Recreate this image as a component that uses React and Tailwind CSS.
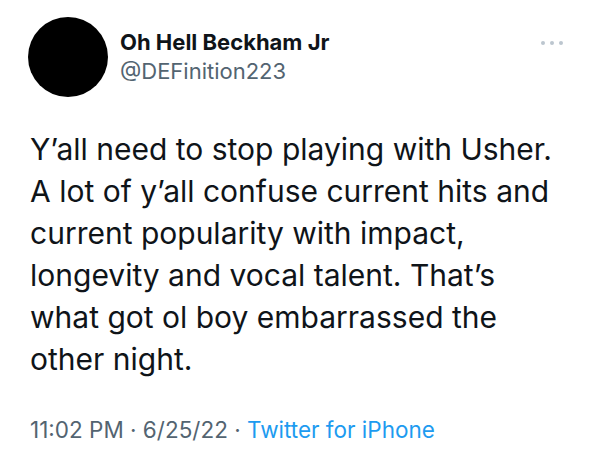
import React from 'react';

export default function App() {
  const font = { fontFamily: 'Inter, "Liberation Sans", sans-serif' };
  return (
    <div className="w-[595px] h-[461px] bg-white overflow-hidden" style={font}>
      {/* header */}
      <div className="flex items-start pt-[17px] pl-[28px] pr-[32px]">
        <div className="w-20 h-20 rounded-full bg-black shrink-0" />
        <div className="ml-[12px] mt-[11px] flex-1">
          <div className="text-[22px] leading-[29px] font-bold text-[#0f1419]">
            Oh Hell Beckham Jr
          </div>
          <div className="text-[22px] leading-[29px] text-[#536471]">
            @DEFinition223
          </div>
        </div>
        <div className="flex gap-[5px] mt-[24px]">
          <span className="w-1 h-1 rounded-full bg-[#bcc6cf]" />
          <span className="w-1 h-1 rounded-full bg-[#bcc6cf]" />
          <span className="w-1 h-1 rounded-full bg-[#bcc6cf]" />
        </div>
      </div>

      {/* body */}
      <p className="mt-[31px] px-[30px] text-[30px] leading-[42px] text-[#0f1419]">
        Y’all need to stop playing with Usher.
        <br />A lot of y’all confuse current hits and
        <br />current popularity with impact,
        <br />longevity and vocal talent. That’s
        <br />what got ol boy embarrassed the
        <br />other night.
      </p>

      {/* footer */}
      <div className="mt-[36px] px-[30px] text-[22.5px] leading-[28px] text-[#536471]">
        11:02 PM · 6/25/22 · <span className="text-[#1d9bf0]">Twitter for iPhone</span>
      </div>
    </div>
  );
}
